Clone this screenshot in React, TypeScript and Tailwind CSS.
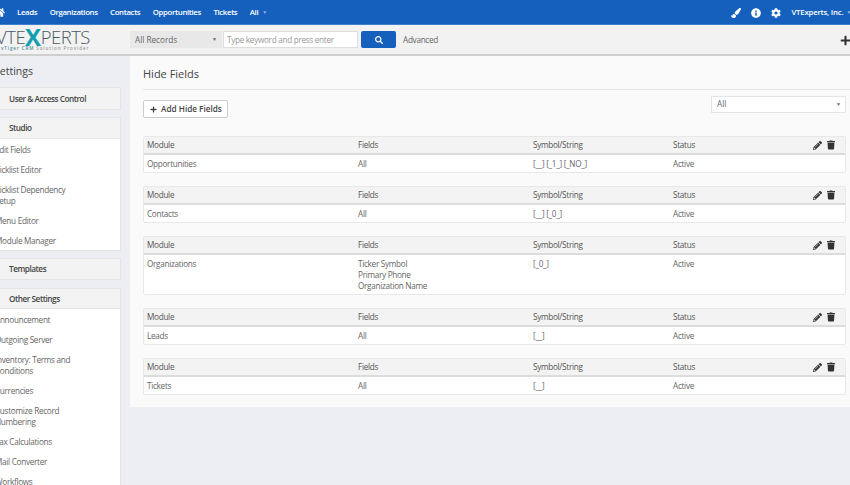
import { FaCog, FaHome, FaInfoCircle, FaPaintBrush, FaPencilAlt, FaPlus, FaSearch, FaTrash } from "react-icons/fa";

const nav = ["Leads", "Organizations", "Contacts", "Opportunities", "Tickets"];

const studio = [["Edit Fields"], ["Picklist Editor"], ["Picklist Dependency", "Setup"], ["Menu Editor"], ["Module Manager"]];
const other = [
  ["Announcement"],
  ["Outgoing Server"],
  ["Inventory: Terms and", "Conditions"],
  ["Currencies"],
  ["Customize Record", "Numbering"],
  ["Tax Calculations"],
  ["Mail Converter"],
  ["Workflows"],
];

const rules = [
  { module: "Opportunities", fields: ["All"], symbol: "[__] [_1_] [_NO_]" },
  { module: "Contacts", fields: ["All"], symbol: "[__] [_0_]" },
  { module: "Organizations", fields: ["Ticker Symbol", "Primary Phone", "Organization Name"], symbol: "[_0_]" },
  { module: "Leads", fields: ["All"], symbol: "[__]" },
  { module: "Tickets", fields: ["All"], symbol: "[__]" },
];

function SideHead({ label, height }: { label: string; height: string }) {
  return (
    <div className={`flex items-center pl-[9px] pt-[1px] bg-[#f3f3f3] border border-l-0 border-[#e4e4e4] font-semibold tracking-[-0.45px] text-[#444] ${height}`}>
      {label}
    </div>
  );
}

function SideList({ items }: { items: string[][] }) {
  return (
    <div className="flex flex-col bg-white border-b border-r border-[#e4e4e4]">
      {items.map((lines) => (
        <div key={lines[0]} className="-ml-[5px] py-[4.5px] leading-[11px] text-[#666]">
          {lines.map((l) => (
            <div key={l}>{l}</div>
          ))}
        </div>
      ))}
    </div>
  );
}

function RuleTable({ module, fields, symbol }: { module: string; fields: string[]; symbol: string }) {
  return (
    <div className="border border-[#e8e8e8] rounded-[2px] bg-white">
      <div className="grid grid-cols-[211px_175px_140px_1fr] items-center h-[18px] pl-[3px] pt-[1px] bg-[#f3f3f3] border-b-2 border-[#dcdcdc] text-[#555]">
        <div>Module</div>
        <div>Fields</div>
        <div>Symbol/String</div>
        <div className="flex items-center justify-between pr-[10px]">
          <span>Status</span>
          <span className="flex items-center gap-[5px] text-[#333]">
            <FaPencilAlt className="w-[9px] h-[9px]" />
            <FaTrash className="w-[8px] h-[10px]" />
          </span>
        </div>
      </div>
      <div className="grid grid-cols-[211px_175px_140px_1fr] pl-[3px] pt-[3px] pb-[3px] leading-[11px] text-[#666]">
        <div>{module}</div>
        <div>
          {fields.map((f) => (
            <div key={f}>{f}</div>
          ))}
        </div>
        <div className="text-[#6b6270]">{symbol}</div>
        <div>Active</div>
      </div>
    </div>
  );
}

export default function App() {
  return (
    <div className="w-[850px] h-[485px] overflow-hidden flex flex-col bg-[#eceef3] text-[8.2px] tracking-[-0.3px] font-['Open_Sans',sans-serif]">
      <div className="h-[25px] shrink-0 flex items-center pt-[1px] bg-[#1560bd] text-white font-semibold text-[7.8px] tracking-[-0.35px] border-b border-[#3f7fcb]">
        <FaHome className="-ml-[6px] w-[11px] h-[11px] mr-[12px]" />
        <div className="flex items-center gap-[12.5px]">
          {nav.map((n) => (
            <span key={n}>{n}</span>
          ))}
          <span className="flex items-center gap-[4px]">
            All <span className="text-[5px] text-[#8fb4e4]">▼</span>
          </span>
        </div>
        <div className="ml-auto flex items-center">
          <FaPaintBrush className="w-[10px] h-[10px] mr-[10px]" />
          <FaInfoCircle className="w-[10px] h-[10px] mr-[10px]" />
          <FaCog className="w-[10px] h-[10px] mr-[10px]" />
          <span className="whitespace-nowrap tracking-[-0.2px]">VTExperts, Inc.</span>
          <span className="ml-[3px] -mr-[1px] text-[5px] text-[#8fb4e4]">▼</span>
        </div>
      </div>

      <div className="h-[31px] shrink-0 flex items-center bg-[#f2f2f2] border-b-2 border-[#cfcfcf]">
        <div className="w-[130px] shrink-0 overflow-hidden">
          <div className="-ml-[4px] flex items-center whitespace-nowrap text-[#4a5a63] text-[18.5px] leading-[17px] font-light tracking-[-0.5px]">
            VTE<span className="text-[24px] text-[#12a0b0] font-bold">X</span>PERTS
          </div>
          <div className="pl-[1px] whitespace-nowrap text-[4.5px] leading-[6px] font-semibold tracking-[0.9px] text-[#4b8d9a]">
            vTiger CRM <span className="text-[#999]">Solution Provider</span>
          </div>
        </div>
        <div className="w-[92px] h-[17px] flex items-center justify-between pt-[1px] px-[5px] bg-[#e8e8e8] text-[#666] tracking-normal">
          All Records <span className="text-[5px]">▼</span>
        </div>
        <div className="ml-[1px] w-[135px] h-[17px] flex items-center pt-[1px] px-[3px] bg-white border border-[#ddd] text-[#999]">
          Type keyword and press enter
        </div>
        <div className="ml-[3px] w-[35px] h-[17px] flex items-center justify-center bg-[#1560bd] rounded-[2px] text-white">
          <FaSearch className="w-[8px] h-[8px]" />
        </div>
        <span className="ml-[7px] pt-[2px] text-[#666]">Advanced</span>
        <FaPlus className="ml-auto -mr-[1px] mt-[1px] w-[11px] h-[11px] text-[#333]" />
      </div>

      <div className="flex flex-1 min-h-0">
        <div className="w-[121px] shrink-0 overflow-hidden flex flex-col">
          <div className="-ml-[6px] h-[31px] shrink-0 flex items-center text-[#444] text-[10.5px] tracking-normal">Settings</div>
          <div className="flex flex-col">
            <SideHead label="User & Access Control" height="h-[23px]" />
            <div className="h-[7px]" />
            <SideHead label="Studio" height="h-[22px]" />
            <SideList items={studio} />
            <div className="h-[7px]" />
            <SideHead label="Templates" height="h-[22px]" />
            <div className="h-[8px]" />
            <SideHead label="Other Settings" height="h-[21px]" />
            <SideList items={other} />
          </div>
        </div>

        <div className="ml-[9px] flex-1 h-[351px] bg-[#fafafa] pl-[13px] pr-[4px]">
          <div className="h-[34px] flex items-center pt-[3px] border-b border-[#e5e5e5] text-[11px] tracking-normal text-[#444] mr-[-4px]">
            Hide Fields
          </div>
          <div className="h-[46px] flex items-start justify-between pt-[10px]">
            <div className="h-[18px] w-[85px] flex items-center gap-[4px] pl-[6px] bg-white border border-[#ccc] rounded-[2px] font-semibold tracking-normal text-[#444]">
              <FaPlus className="w-[7px] h-[7px]" />
              Add Hide Fields
            </div>
            <div className="-mt-[4px] w-[135px] h-[17px] flex items-center justify-between pl-[5px] pr-[4px] bg-white border border-[#e5e5e5] text-[#666] tracking-normal">
              All <span className="text-[5px]">▼</span>
            </div>
          </div>
          <div className="flex flex-col gap-[13px]">
            {rules.map((r) => (
              <RuleTable key={r.module} {...r} />
            ))}
          </div>
        </div>
      </div>
    </div>
  );
}
